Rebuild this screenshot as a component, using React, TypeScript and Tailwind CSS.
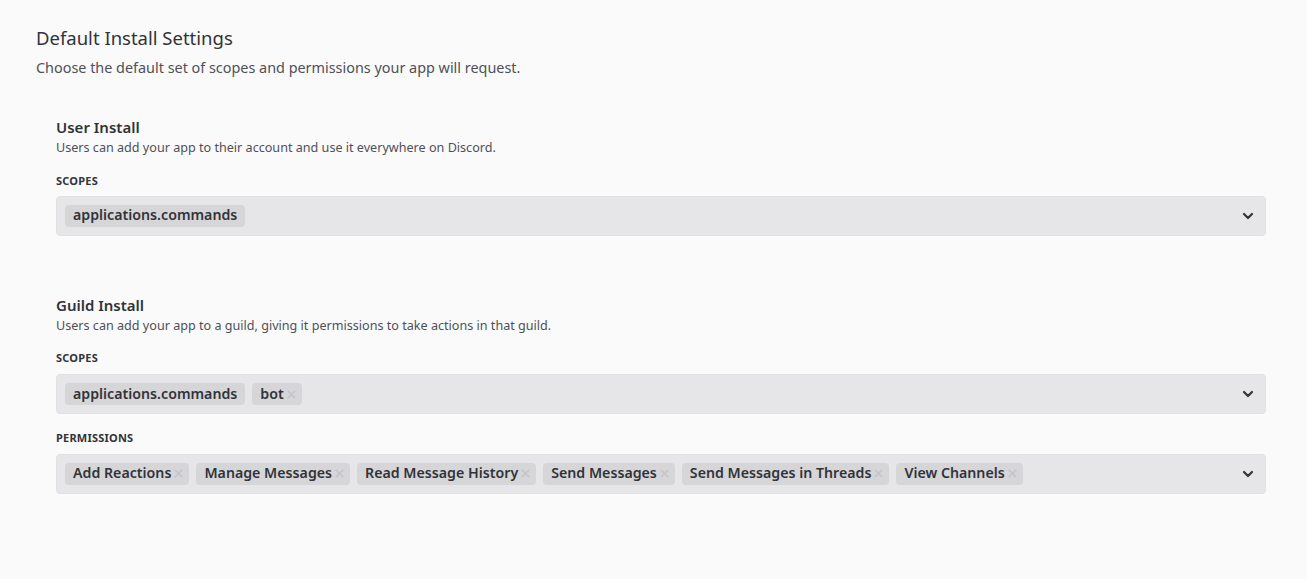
import { ChevronDown, X } from "lucide-react"

const font = { fontFamily: '"Noto Sans", "Open Sans", sans-serif' }

function Chip({ label, removable }: { label: string; removable?: boolean }) {
    return (
        <div className="flex items-center h-[22px] rounded-[4px] bg-[#d6d6d9] pl-2 pr-[4px]">
            <span className="text-[14.2px] font-semibold text-[#313338] leading-none">{label}</span>
            {removable ? (
                <X className="w-[13px] h-[13px] text-[#c4c5c9] ml-[1px]" strokeWidth={3} />
            ) : (
                <span className="w-1" />
            )}
        </div>
    )
}

function MultiSelect({ chips }: { chips: { label: string; removable?: boolean }[] }) {
    return (
        <div className="flex items-center h-10 rounded-[4px] border border-[#e1e1e3] bg-[#e6e6e8] pl-2 pr-[9px]">
            <div className="flex flex-1 gap-[7px]">
                {chips.map((c) => (
                    <Chip key={c.label} label={c.label} removable={c.removable} />
                ))}
            </div>
            <ChevronDown className="w-4 h-4 text-[#313338]" strokeWidth={3.2} />
        </div>
    )
}

function Label({ children }: { children: string }) {
    return <div className="text-[11px] font-bold uppercase text-[#313338] tracking-[0.02em]">{children}</div>
}

export default function App() {
    return (
        <main className="min-h-[579px] bg-[#fafafa] px-9 pt-[26px]" style={font}>
            <h1 className="text-[18.5px] text-[#313338] leading-6">Default Install Settings</h1>
            <p className="mt-[8px] text-[14.4px] text-[#4e5058] leading-5">
                Choose the default set of scopes and permissions your app will request.
            </p>

            <div className="ml-5 mr-[5px] mt-[39px]">
                {/* USER INSTALL */}
                <div>
                    <div className="text-[15px] font-semibold text-[#313338] leading-5">User Install</div>
                    <div className="mt-[3px] text-[12.6px] text-[#4e5058] leading-4">
                        Users can add your app to their account and use it everywhere on Discord.
                    </div>
                    <div className="mt-[17px]">
                        <Label>Scopes</Label>
                    </div>
                    <div className="mt-[6px]">
                        <MultiSelect chips={[{ label: "applications.commands" }]} />
                    </div>
                </div>

                {/* GUILD INSTALL */}
                <div className="mt-[59px]">
                    <div className="text-[15px] font-semibold text-[#313338] leading-5">Guild Install</div>
                    <div className="mt-[3px] text-[12.6px] text-[#4e5058] leading-4">
                        Users can add your app to a guild, giving it permissions to take actions in that guild.
                    </div>
                    <div className="mt-[16px]">
                        <Label>Scopes</Label>
                    </div>
                    <div className="mt-[8px]">
                        <MultiSelect chips={[{ label: "applications.commands" }, { label: "bot", removable: true }]} />
                    </div>
                    <div className="mt-[16px]">
                        <Label>Permissions</Label>
                    </div>
                    <div className="mt-[7px]">
                        <MultiSelect
                            chips={[
                                { label: "Add Reactions", removable: true },
                                { label: "Manage Messages", removable: true },
                                { label: "Read Message History", removable: true },
                                { label: "Send Messages", removable: true },
                                { label: "Send Messages in Threads", removable: true },
                                { label: "View Channels", removable: true },
                            ]}
                        />
                    </div>
                </div>
            </div>
        </main>
    )
}
